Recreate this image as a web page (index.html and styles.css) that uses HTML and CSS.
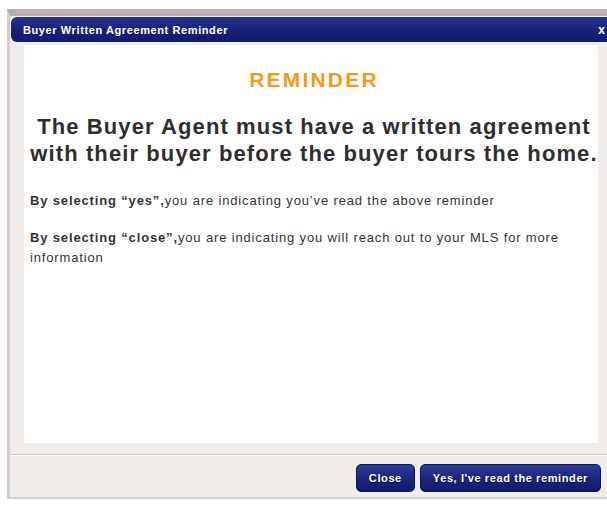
FILE: index.html
```html
<!DOCTYPE html>
<html>
<head>
<meta charset="utf-8">
<link rel="stylesheet" href="styles.css">
</head>
<body>
<div class="window">
  <div class="titlebar">
    <span class="title">Buyer Written Agreement Reminder</span>
    <span class="close-x">x</span>
  </div>
  <div class="panel">
    <h1 class="heading">REMINDER</h1>
    <p class="lead">The Buyer Agent must have a written agreement with their buyer before the buyer tours the home.</p>
    <p class="note"><b>By selecting “yes”,</b>you are indicating you’ve read the above reminder</p>
    <p class="note"><b>By selecting “close”,</b>you are indicating you will reach out to your MLS for more information</p>
  </div>
  <div class="footer">
    <button class="btn">Close</button>
    <button class="btn">Yes, I've read the reminder</button>
  </div>
</div>
</body>
</html>
```
FILE: styles.css
```css
html, body {
  margin: 0;
  background: #ffffff;
  font-family: "Liberation Sans", Arial, sans-serif;
}

.window {
  margin: 9px 0 0 7px;
  height: 490px;
  box-sizing: border-box;
  background: #efecea;
  border-top: 7px solid #b6b1ae;
  border-left: 3px solid #d3cecb;
  border-bottom: 2px solid #d3cecb;
  display: flex;
  flex-direction: column;
}

.titlebar {
  height: 25px;
  margin-top: 1px;
  margin-left: 1px;
  border-radius: 6px 0 0 6px;
  background: linear-gradient(#26348a, #19227a 50%, #121a6c);
  display: flex;
  align-items: center;
  justify-content: space-between;
  padding: 0 2px 0 12px;
  color: #ffffff;
  font-size: 11px;
  font-weight: bold;
  letter-spacing: 0.6px;
}

.close-x {
  font-size: 12px;
  letter-spacing: 0;
}

.panel {
  background: #ffffff;
  margin: 3px 9px 0 14px;
  height: 398px;
  padding: 23px 0 0 6px;
  box-sizing: border-box;
  color: #333333;
}

.heading {
  margin: 0;
  text-align: center;
  color: #f39a1e;
  font-size: 21px;
  font-weight: bold;
  line-height: 24px;
  letter-spacing: 2.2px;
}

.lead {
  margin: 21px -6px 24px -6px;
  text-align: center;
  font-size: 22px;
  font-weight: bold;
  line-height: 27px;
  letter-spacing: 1.1px;
  color: #2e2e2e;
}

.note {
  margin: 0 0 17px;
  font-size: 13px;
  line-height: 20px;
  letter-spacing: 0.85px;
  color: #333333;
}

.footer {
  margin-top: 11px;
  border-top: 1px solid #c9c5c2;
  box-shadow: inset 0 1px 0 #fbfaf9;
  flex: 1;
  display: flex;
  justify-content: flex-end;
  align-items: flex-start;
  gap: 5px;
  padding: 9px 6px 0 0;
}

.btn {
  height: 28px;
  border: 1px solid #0d1358;
  border-radius: 5px;
  background: linear-gradient(#2d3c93, #1b257c 55%, #121a69);
  color: #ffffff;
  font-family: "Liberation Sans", Arial, sans-serif;
  font-size: 11px;
  font-weight: bold;
  letter-spacing: 0.6px;
  padding: 0 12px;
  text-shadow: 0 1px 1px #0a0f40;
}
```
